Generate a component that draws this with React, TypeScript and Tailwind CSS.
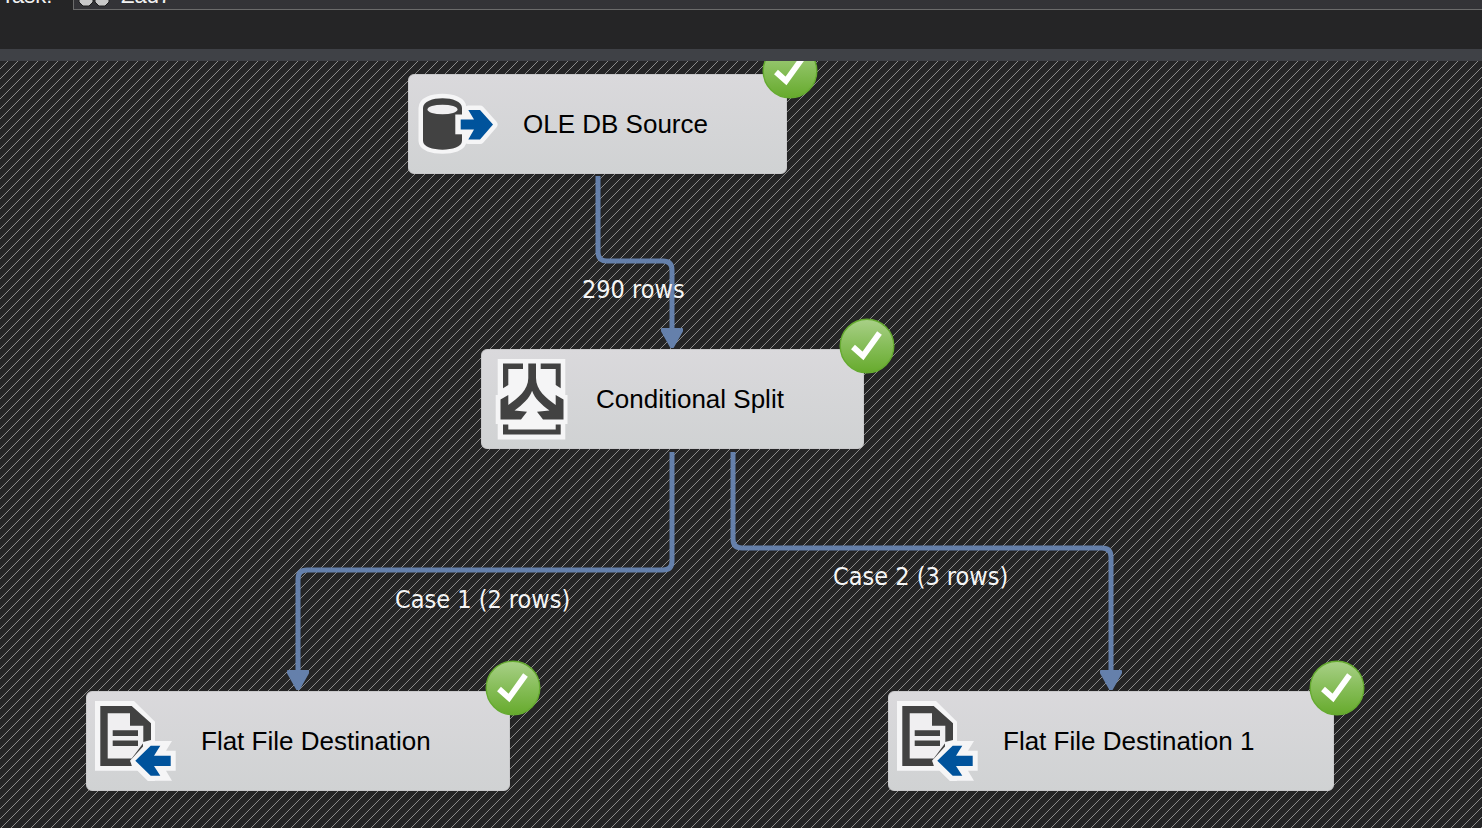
import React from "react";

const LINK = "#6580ab";

function Hatch() {
  const cells = Array.from({ length: 10 }, (_, y) => {
    const x = (17 - y) % 10;
    return `M${x} ${y}h1v1h-1z`;
  }).join("");
  return (
    <svg className="absolute inset-0 h-full w-full" aria-hidden="true">
      <defs>
        <pattern id="hatch" width="10" height="10" patternUnits="userSpaceOnUse">
          <path d={cells} fill="#8a8a8a" shapeRendering="crispEdges" />
        </pattern>
      </defs>
      <rect width="100%" height="100%" fill="url(#hatch)" />
    </svg>
  );
}

function Links() {
  return (
    <svg className="absolute left-0 top-0 h-full w-full" aria-hidden="true">
      <g fill="none" stroke={LINK} strokeWidth="5">
        <path d="M598 115V191Q598 200 607 200H663Q672 200 672 209V268" />
        <path d="M672 391V500Q672 509 663 509H307Q298 509 298 518V610" />
        <path d="M733 391V478Q733 487 742 487H1102Q1111 487 1111 496V610" />
      </g>
      <g fill={LINK} stroke={LINK} strokeWidth="2" strokeLinejoin="round">
        <path d="M662 268H682V270L673 286H671L662 270Z" />
        <path d="M288 610H308V612L299 628H297L288 612Z" />
        <path d="M1101 610H1121V612L1112 628H1110L1101 612Z" />
      </g>
    </svg>
  );
}

function CheckBadge() {
  return (
    <svg className="absolute -right-8 -top-8 h-14 w-14" viewBox="0 0 56 56" role="img" aria-label="Succeeded">
      <defs>
        <linearGradient id="ok" x1="0" y1="0" x2="0" y2="1">
          <stop offset="0" stopColor="#a9d088" />
          <stop offset="0.5" stopColor="#86bd58" />
          <stop offset="1" stopColor="#66aa2c" />
        </linearGradient>
      </defs>
      <circle cx="28" cy="28" r="26.8" fill="url(#ok)" stroke="#65aa30" strokeWidth="1.4" />
      <path d="M14 29L24 38L40.5 15" fill="none" stroke="#fff" strokeWidth="5.8" />
    </svg>
  );
}

function DatabaseIcon() {
  return (
    <svg className="h-20 w-20 shrink-0 overflow-visible" viewBox="0 0 80 80" aria-hidden="true">
      <g fill="#f5f5f6" stroke="#f5f5f6" strokeWidth="9" strokeLinejoin="round">
        <path d="M6 24C6 11 45 11 45 24V57C45 68 6 68 6 57Z" />
        <path d="M43.7 35.5H57L51.3 26H63L76 40.5L63 55.5H51.3L57 45.5H43.7Z" />
      </g>
      <path d="M6 24C6 11 45 11 45 24V57C45 68.5 6 68.5 6 57Z" fill="#424242" />
      <ellipse cx="25.5" cy="25.5" rx="15" ry="4.8" fill="#f0eff1" />
      <path d="M38.3 30.5H52V50.3H38.3Z" fill="#f5f5f6" />
      <path d="M43.7 35.5H57L51.3 26H63L76 40.5L63 55.5H51.3L57 45.5H43.7Z" fill="#00539c" />
    </svg>
  );
}

function SplitIcon() {
  return (
    <svg className="h-20 w-20 shrink-0 overflow-visible" viewBox="0 0 80 80" aria-hidden="true">
      <path d="M7.7 0H75.3V36H77.5V65H75.3V80.5H7.7V65H5.7V36H7.7Z" fill="#f5f5f6" />
      <path
        d="M13 4.5H33V10H18.3V26L13 29.3ZM50.7 4.5H70.7V29.3L65.7 26V10H50.7Z M13 65.5H18.3V70.5H65.7V65.5H70.7V75.5H13Z"
        fill="#424242"
      />
      <path
        d="M38.3 4.5H46V19C46 31 56 39 65.7 46V36L73.5 40.5V60.5H53L47 52.7L59.5 51.5C51 45 45 40 42.1 31.7C39 40 33 45 24.5 51.5L37 52.7L31 60.5H10.5V40.5L18.3 36V46C28 39 38.3 31 38.3 19Z"
        fill="#424242"
      />
    </svg>
  );
}

function FileIcon() {
  return (
    <svg className="h-20 w-20 shrink-0 overflow-visible" viewBox="0 0 80 80" aria-hidden="true">
      <path d="M0 0H39L60 20.7V40H77L71 49.7H80.7V69.7H71L77 79.7H53L43 69.7H0Z" fill="#f5f5f6" />
      <path d="M5.3 5H36.7L56 22.3V39L48 41V58H36.7V65H5.3Z" fill="#424242" />
      <path d="M12.7 12.3H35V24.7H48.3V42L36.7 57.5H12.7Z" fill="#f0eff1" />
      <path d="M35 59.7L53 40H56V42L60 80H53L36.7 64Z" fill="#f5f5f6" />
      <path d="M17.7 29.3H43V35H17.7ZM17.7 39.5H43V45H17.7Z" fill="#424242" />
      <path d="M40.3 59.7L55.7 44.7H65.3L59 54.7H75.7V65H59L65.3 74.7H55.7Z" fill="#00539c" />
    </svg>
  );
}

interface NodeProps {
  label: string;
  place: string;
  icon: React.ReactNode;
}

function FlowNode({ label, place, icon }: NodeProps) {
  return (
    <div
      className={`absolute flex h-[100px] items-center gap-[26px] rounded-md border border-[#c9c9cb] bg-linear-to-b from-[#dad9dc] to-[#d0d2d3] pl-2 text-[26px] leading-8 text-black ${place}`}
    >
      {icon}
      <span className="whitespace-nowrap">{label}</span>
      <CheckBadge />
    </div>
  );
}

export default function App() {
  return (
    <div className="flex min-h-screen flex-col overflow-hidden bg-[#252526] font-['Liberation_Sans',Arial,sans-serif]">
      <header className="flex h-[49px] items-start overflow-hidden text-[22px] leading-6 text-[#f1f1f1]">
        <div className="-mt-4 flex w-full items-start">
          <span id="task-label" className="w-[73px] shrink-0 pl-px">Task:</span>
          <button
            type="button"
            aria-labelledby="task-label task-name"
            className="flex h-[26px] flex-1 items-start gap-[11px] border-b border-l border-[#6b6b6b] bg-[#333337] pl-1 text-left"
          >
            <svg className="h-6 w-8" viewBox="0 0 32 24" aria-hidden="true">
              <path d="M1 4H15V18L11 22H5L1 18ZM17 4H31V18L27 22H21L17 18Z" fill="#c8c8c8" stroke="#1e1e1e" />
            </svg>
            <span id="task-name">Zad7</span>
          </button>
        </div>
      </header>
      <div className="h-3 bg-[#3f4146]" />
      <main className="relative flex-1 overflow-hidden">
        <Hatch />
        <FlowNode label="OLE DB Source" place="left-[408px] top-[13px] w-[379px]" icon={<DatabaseIcon />} />
        <FlowNode label="Conditional Split" place="left-[481px] top-[288px] w-[383px]" icon={<SplitIcon />} />
        <FlowNode label="Flat File Destination" place="left-[86px] top-[630px] w-[424px]" icon={<FileIcon />} />
        <FlowNode label="Flat File Destination 1" place="left-[888px] top-[630px] w-[446px]" icon={<FileIcon />} />
        <Links />
        <div className="font-['DejaVu_Sans_Condensed','DejaVu_Sans',sans-serif] text-[25px] leading-8 text-[#f5f5f5]">
          <span className="absolute left-[582px] top-[213px] whitespace-nowrap">290 rows</span>
          <span className="absolute left-[395px] top-[523px] whitespace-nowrap">Case 1 (2 rows)</span>
          <span className="absolute left-[833px] top-[500px] whitespace-nowrap">Case 2 (3 rows)</span>
        </div>
      </main>
    </div>
  );
}
